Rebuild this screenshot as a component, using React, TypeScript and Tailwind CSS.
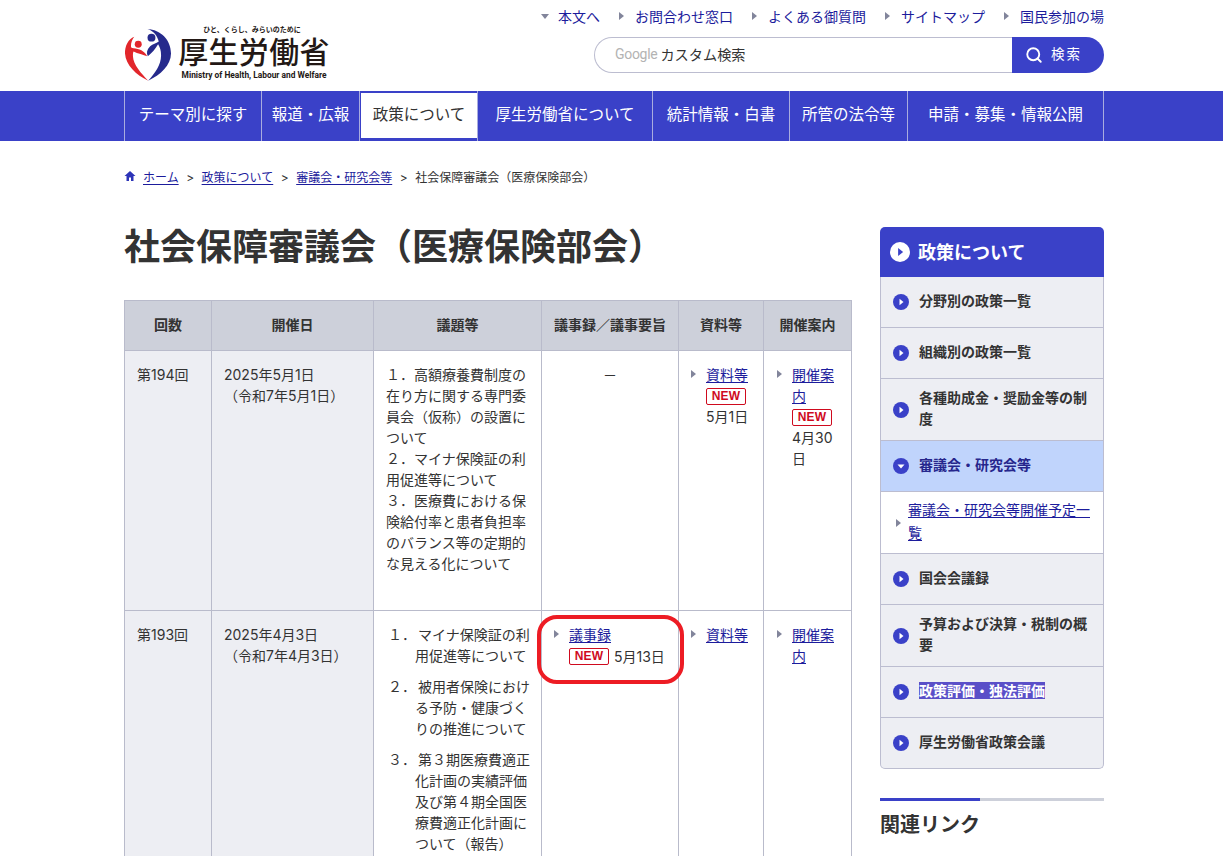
import { Search } from "lucide-react";

const font = { fontFamily: 'Inter, "Noto Sans CJK JP", "Noto Sans", sans-serif' };

const topLinks = ["本文へ", "お問合わせ窓口", "よくある御質問", "サイトマップ", "国民参加の場"];

const navItems = [
  { label: "テーマ別に探す", width: "w-[137px]" },
  { label: "報道・広報", width: "w-[98px]" },
  { label: "政策について", width: "w-[118px]", active: true },
  { label: "厚生労働省について", width: "w-[175px]" },
  { label: "統計情報・白書", width: "w-[137px]" },
  { label: "所管の法令等", width: "w-[118px]" },
  { label: "申請・募集・情報公開", width: "w-[196px]" },
];

const Arrow = ({ down = false }: { down?: boolean }) => (
  <svg width="8" height="10" viewBox="0 0 8 10" className="shrink-0">
    {down ? <path d="M0 3h8L4 8z" fill="#82859b" /> : <path d="M1 1l5 4-5 4z" fill="#82859b" />}
  </svg>
);

const Dot = ({ down = false, large = false }: { down?: boolean; large?: boolean }) => (
  <svg width={large ? 20 : 16} height={large ? 20 : 16} viewBox="0 0 16 16" className="shrink-0">
    <circle cx="8" cy="8" r="8" fill={large ? "#fff" : "#3a41c8"} />
    {down ? (
      <path d="M4.5 6.5h7L8 10.5z" fill="#fff" />
    ) : (
      <path d="M6.5 4.8l4 3.2-4 3.2z" fill={large ? "#3a41c8" : "#fff"} />
    )}
  </svg>
);

const New = () => (
  <span className="inline-block w-[40px] h-[17px] border border-[#cf0a1e] rounded-[2px] text-[#cf0a1e] text-[12px] leading-[15px] font-bold text-center tracking-[0.2px] [font-family:'Liberation_Sans',sans-serif]">
    NEW
  </span>
);

const Lnk = ({ children }: { children: React.ReactNode }) => (
  <a className="text-[#1c1c9c] underline underline-offset-2">{children}</a>
);

const LinkCell = ({ label, children }: { label: string; children?: React.ReactNode }) => (
  <div className="flex items-start">
    <span className="mt-[5px] mr-[8px] -ml-[1px]">
      <Arrow />
    </span>
    <div className="min-w-0 break-all">
      <Lnk>{label}</Lnk>
      {children}
    </div>
  </div>
);

const Logo = () => (
  <svg width="48" height="58" viewBox="25 20 145 175" className="shrink-0">
    <circle cx="108" cy="52" r="12" fill="#262a8c" />
    <circle cx="68" cy="72" r="10.5" fill="#e2262b" />
    <path
      d="M96 26C135 28 167 58 167 100C167 135 135 165 98 182C118 160 137 135 137 105C137 92 134 82 128 72C120 86 110 98 97 108C92 98 94 88 104 78C112 72 122 70 130 64C126 46 114 32 96 26Z"
      fill="#262a8c"
    />
    <path
      d="M56 49C38 55 27 78 28 100C30 135 62 165 98 182C78 160 53 135 52 108C52 102 52 97 54 94C66 100 84 104 95 108C87 92 70 85 54 84C48 84 46 82 46 78C46 66 50 56 56 49Z"
      fill="#e2262b"
    />
  </svg>
);

const sideItems = [
  { label: "分野別の政策一覧", h: "h-[50px]" },
  { label: "組織別の政策一覧", h: "h-[51px]" },
  { label: "各種助成金・奨励金等の制度", h: "h-[62px]" },
  { label: "審議会・研究会等", h: "h-[51px]", open: true },
  { label: "国会会議録", h: "h-[51px]" },
  { label: "予算および決算・税制の概要", h: "h-[62px]" },
  { label: "政策評価・独法評価", h: "h-[51px]", selected: true },
  { label: "厚生労働省政策会議", h: "h-[51px]" },
];

const th = "border border-[#b9bbcb] bg-[#cdd0da] font-bold text-[14px] text-center text-[#333] h-[50px] p-0 pb-[2px]";
const td = "border border-[#b9bbcb] align-top px-[12px] pt-[13px] pb-[12px]";

export default function App() {
  return (
    <div style={font} className="relative h-[856px] w-[1223px] overflow-hidden bg-white text-[14px] leading-[21px] text-[#333]">
      <header className="h-[91px] pl-[124px] w-[1104px] flex justify-between">
        <div className="pt-[25px] flex items-start">
          <div className="mt-[2px]">
            <Logo />
          </div>
          <div className="ml-[2px] w-[160px] flex flex-col items-center">
            <span className="text-[7px] leading-[10px] font-bold text-[#231815] -ml-[4px]">ひと、くらし、みらいのために</span>
            <span className="text-[30px] leading-[34px] font-medium text-[#231815] tracking-[0.3px]">厚生労働省</span>
            <span className="text-[8.4px] leading-[12px] font-bold text-[#231815] whitespace-nowrap [font-family:'Roboto',sans-serif]">
              Ministry of Health, Labour and Welfare
            </span>
          </div>
        </div>
        <div className="flex flex-col items-end">
          <div className="flex items-center h-[33px] pb-[1px] gap-[18px]">
            {topLinks.map((l, i) => (
              <span key={l} className="flex items-center gap-[9px] text-[#1c1c9c] whitespace-nowrap">
                <Arrow down={i === 0} />
                {l}
              </span>
            ))}
          </div>
          <div className="mt-[4px] flex w-[510px] h-[36px]">
            <div className="flex-1 flex items-center border border-r-0 border-[#bcbdd0] rounded-l-[18px] pl-[20px] pb-[2px]">
              <span className="text-[14px] text-[#b3b3b3] tracking-[-0.3px] mr-[3px] [font-family:'Roboto',sans-serif]">Google</span>
              <span className="text-[14.2px]">カスタム検索</span>
            </div>
            <div className="w-[92px] bg-[#3a41c8] rounded-r-[18px] flex items-center text-white pl-[13px] gap-[8px]">
              <Search size={18} strokeWidth={2.5} />
              <span className="text-[13.5px] tracking-[2px] pb-[2px]">検索</span>
            </div>
          </div>
        </div>
      </header>

      <nav className="h-[50px] bg-[#3a41c8] pl-[124px]">
        <div className="flex h-full w-[980px] border-r border-[#a9acdf]">
          {navItems.map((n) =>
            n.active ? (
              <div key={n.label} className={`${n.width} shrink-0 h-full border-l border-[#a9acdf] pl-[1px] pt-[2px] pb-[3px]`}>
                <div className="h-full bg-white flex items-center justify-center text-[15.5px] text-[#333] pb-[3px]">{n.label}</div>
              </div>
            ) : (
              <div key={n.label} className={`${n.width} shrink-0 h-full border-l border-[#a9acdf] flex items-center justify-center text-[15.5px] text-white pb-[4px]`}>
                {n.label}
              </div>
            )
          )}
        </div>
      </nav>

      <div className="pl-[124px] h-[86px] pt-[27px] flex items-start text-[12px] leading-[20px] gap-[7.5px] text-[#333]">
        <svg width="12" height="12" viewBox="0 0 12 12" className="mt-[2px] -mr-[0.5px]" fill="#2d34b8">
          <path d="M6 1L0.5 6H2.5V11H5V7.5H7V11H9.5V6H11.5Z" />
        </svg>
        <Lnk>ホーム</Lnk>
        <span>&gt;</span>
        <Lnk>政策について</Lnk>
        <span>&gt;</span>
        <Lnk>審議会・研究会等</Lnk>
        <span>&gt;</span>
        <span>社会保障審議会（医療保険部会）</span>
      </div>

      <div className="pl-[124px] flex items-start gap-[28px] w-[1104px]">
        <main className="w-[728px] shrink-0">
          <h1 className="pt-[3px] text-[36px] leading-[34px] font-bold text-[#333] whitespace-nowrap">社会保障審議会（医療保険部会）</h1>
          <table className="mt-[36px] w-[727px] table-fixed border-collapse">
            <colgroup>
              <col className="w-[87px]" />
              <col className="w-[162px]" />
              <col className="w-[168px]" />
              <col className="w-[137px]" />
              <col className="w-[85px]" />
              <col className="w-[88px]" />
            </colgroup>
            <thead>
              <tr>
                <th className={th}>回数</th>
                <th className={th}>開催日</th>
                <th className={th}>議題等</th>
                <th className={`${th} whitespace-nowrap`}>議事録／議事要旨</th>
                <th className={th}>資料等</th>
                <th className={th}>開催案内</th>
              </tr>
            </thead>
            <tbody>
              <tr className="h-[260px]">
                <td className={`${td} bg-[#edeef3]`}>第194回</td>
                <td className={`${td} bg-[#edeef3]`}>
                  2025年5月1日
                  <br />
                  （令和7年5月1日）
                </td>
                <td className={td}>
                  　１．高額療養費制度の在り方に関する専門委員会（仮称）の設置について
                  <br />
                  　２．マイナ保険証の利用促進等について
                  <br />
                  　３．医療費における保険給付率と患者負担率のバランス等の定期的な見える化について
                </td>
                <td className={`${td} text-center`}>－</td>
                <td className={td}>
                  <LinkCell label="資料等">
                    <div className="-mt-[1px] h-[22px]">
                      <New />
                    </div>
                    5月1日
                  </LinkCell>
                </td>
                <td className={`${td} pl-[13px]`}>
                  <LinkCell label="開催案内">
                    <div className="-mt-[1px] h-[22px]">
                      <New />
                    </div>
                    4月30日
                  </LinkCell>
                </td>
              </tr>
              <tr>
                <td className={`${td} bg-[#edeef3]`}>第193回</td>
                <td className={`${td} bg-[#edeef3]`}>
                  2025年4月3日
                  <br />
                  （令和7年4月3日）
                </td>
                <td className={td}>
                  <ol className="pl-[2px] -mr-[4px] flex flex-col gap-[10px]">
                    {[
                      "マイナ保険証の利用促進等について",
                      "被用者保険における予防・健康づくりの推進について",
                      "第３期医療費適正化計画の実績評価及び第４期全国医療費適正化計画について（報告）",
                    ].map((t, i) => (
                      <li key={t} className="flex">
                        <span className="w-[27px] shrink-0">{"１２３"[i]}．</span>
                        <span className="[text-indent:3px]">{t}</span>
                      </li>
                    ))}
                  </ol>
                </td>
                <td className={td}>
                  <LinkCell label="議事録">
                    <div className="mt-[1px] flex items-center gap-[5px] whitespace-nowrap">
                      <New />
                      5月13日
                    </div>
                  </LinkCell>
                </td>
                <td className={td}>
                  <LinkCell label="資料等" />
                </td>
                <td className={`${td} pl-[13px]`}>
                  <LinkCell label="開催案内" />
                </td>
              </tr>
            </tbody>
          </table>
        </main>

        <aside className="w-[224px] shrink-0">
          <div className="h-[50px] bg-[#3a41c8] rounded-t-[5px] flex items-center pl-[10px] gap-[8px] text-white text-[18px] font-bold">
            <Dot large />
            <span>政策について</span>
          </div>
          <ul className="border border-t-0 border-[#bcbdd0] rounded-b-[5px] overflow-hidden bg-[#edeef3] text-[14px] leading-[21px] font-bold">
            {sideItems.map((s, i) => (
              <li key={s.label}>
                <div className={`${s.h} box-border flex items-center pl-[12px] pr-[10px] gap-[10px] ${i > 0 ? "border-t border-[#bcbdd0]" : ""} ${s.open ? "bg-[#c0d4fc] text-[#26268c]" : ""}`}>
                  <Dot down={s.open} />
                  <span className="pb-[3px]">{s.selected ? <span className="bg-[#5a4fc8] text-white">{s.label}</span> : s.label}</span>
                </div>
                {s.open && (
                  <div className="h-[62px] box-border bg-white border-t border-[#bcbdd0] flex items-center pl-[14px] pr-[10px] gap-[5px] font-normal">
                    <Arrow />
                    <span className="text-[#1c1c9c] underline underline-offset-2 leading-[23px] pb-[3px]">審議会・研究会等開催予定一覧</span>
                  </div>
                )}
              </li>
            ))}
          </ul>
          <div className="mt-[29px] h-[3px] bg-[#cdd0da]">
            <div className="h-full w-[100px] bg-[#3a41c8]" />
          </div>
          <h2 className="mt-[9px] text-[20px] leading-[30px] font-bold">関連リンク</h2>
        </aside>
      </div>

      <div className="absolute left-[537px] top-[615px] w-[147px] h-[69px] border-[4px] border-[#ed1c24] rounded-[20px]" />
    </div>
  );
}
